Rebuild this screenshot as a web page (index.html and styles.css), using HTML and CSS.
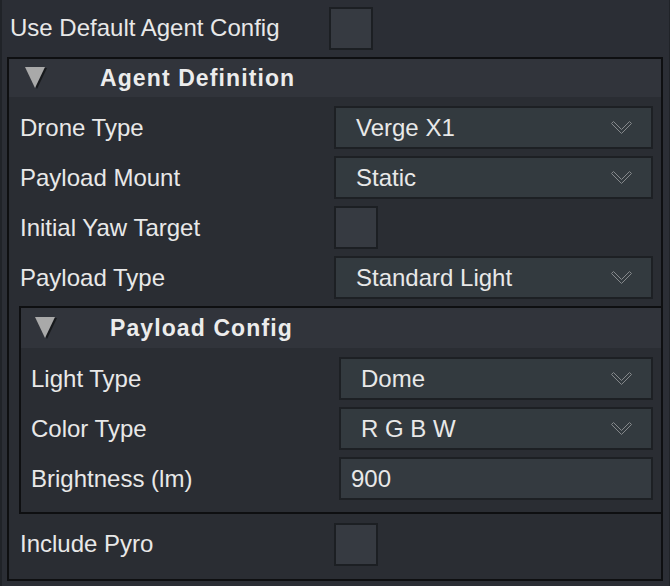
FILE: index.html
```html
<!DOCTYPE html>
<html>
<head>
<meta charset="utf-8">
<link rel="stylesheet" href="styles.css">
</head>
<body>
<div class="page">
  <div class="top-row">
    <span class="label top-label">Use Default Agent Config</span>
    <span class="checkbox"></span>
  </div>
  <section class="foldout agent">
    <div class="fold-header">
      <svg class="tri" width="22" height="22" viewBox="0 0 22 22"><polygon points="2,1 22,1 12,22" fill="#17191c"/><polygon points="0,0 20,0 10,21" fill="#a9a9a9"/></svg>
      <span class="fold-title">Agent Definition</span>
    </div>
    <div class="fold-body">
      <div class="row">
        <span class="label">Drone Type</span>
        <div class="dropdown"><span>Verge X1</span><svg class="chev" width="21" height="13" viewBox="0 0 21 13"><polygon points="0.5,2.5 2.5,0.5 10.5,8.5 18.5,0.5 20.5,2.5 10.5,12.5" fill="none" stroke="#85888b" stroke-width="1"/></svg></div>
      </div>
      <div class="row">
        <span class="label">Payload Mount</span>
        <div class="dropdown"><span>Static</span><svg class="chev" width="21" height="13" viewBox="0 0 21 13"><polygon points="0.5,2.5 2.5,0.5 10.5,8.5 18.5,0.5 20.5,2.5 10.5,12.5" fill="none" stroke="#85888b" stroke-width="1"/></svg></div>
      </div>
      <div class="row">
        <span class="label">Initial Yaw Target</span>
        <span class="checkbox"></span>
      </div>
      <div class="row">
        <span class="label">Payload Type</span>
        <div class="dropdown"><span>Standard Light</span><svg class="chev" width="21" height="13" viewBox="0 0 21 13"><polygon points="0.5,2.5 2.5,0.5 10.5,8.5 18.5,0.5 20.5,2.5 10.5,12.5" fill="none" stroke="#85888b" stroke-width="1"/></svg></div>
      </div>
      <section class="foldout payload">
        <div class="fold-header">
          <svg class="tri" width="22" height="22" viewBox="0 0 22 22"><polygon points="2,1 22,1 12,22" fill="#17191c"/><polygon points="0,0 20,0 10,21" fill="#a9a9a9"/></svg>
          <span class="fold-title">Payload Config</span>
        </div>
        <div class="fold-body">
          <div class="row">
            <span class="label">Light Type</span>
            <div class="dropdown"><span>Dome</span><svg class="chev" width="21" height="13" viewBox="0 0 21 13"><polygon points="0.5,2.5 2.5,0.5 10.5,8.5 18.5,0.5 20.5,2.5 10.5,12.5" fill="none" stroke="#85888b" stroke-width="1"/></svg></div>
          </div>
          <div class="row">
            <span class="label">Color Type</span>
            <div class="dropdown"><span>R G B W</span><svg class="chev" width="21" height="13" viewBox="0 0 21 13"><polygon points="0.5,2.5 2.5,0.5 10.5,8.5 18.5,0.5 20.5,2.5 10.5,12.5" fill="none" stroke="#85888b" stroke-width="1"/></svg></div>
          </div>
          <div class="row">
            <span class="label">Brightness (lm)</span>
            <div class="textfield">900</div>
          </div>
        </div>
      </section>
      <div class="row row-last">
        <span class="label">Include Pyro</span>
        <span class="checkbox"></span>
      </div>
    </div>
  </section>
</div>
</body>
</html>
```
FILE: styles.css
```css
html, body {
  margin: 0;
  padding: 0;
  background: #2b2f36;
}

.page {
  box-sizing: border-box;
  width: 670px;
  height: 586px;
  overflow: hidden;
  background: #2b2e35;
  border-left: 2px solid #202328;
  border-right: 1px solid #202328;
  font-family: "Liberation Sans", Arial, sans-serif;
  font-size: 24px;
  color: #e8e8e8;
}

.label {
  flex: none;
  white-space: nowrap;
}

.top-row {
  display: flex;
  align-items: center;
  height: 44px;
  margin: 6px 0 7px;
  padding-left: 8px;
}

.top-label {
  width: 319px;
}

.checkbox {
  box-sizing: border-box;
  display: block;
  width: 44px;
  height: 43px;
  background: #363a41;
  border: 2px solid #1c1f23;
}

.foldout {
  box-sizing: border-box;
  border: 2px solid #0e0f11;
}

.agent {
  width: 656px;
  margin-left: 5px;
  background: #2a2d33;
}

.fold-header {
  display: flex;
  align-items: center;
  height: 38px;
  padding-left: 16px;
  background: #31343b;
}

.tri {
  display: block;
  flex: none;
  margin-right: 53px;
}

.fold-title {
  font-weight: bold;
  font-size: 23px;
  letter-spacing: 1.1px;
  color: #ececec;
  white-space: nowrap;
}

.fold-body {
  display: flex;
  flex-direction: column;
  gap: 7px;
  padding: 9px 0 13px;
}

.row {
  display: flex;
  align-items: center;
  height: 43px;
  padding-left: 11px;
  padding-right: 8px;
}

.row .label {
  width: 314px;
}

.row-last {
  height: 44px;
  margin-top: 1px;
}

.dropdown {
  box-sizing: border-box;
  flex: 1;
  height: 43px;
  display: flex;
  align-items: center;
  justify-content: space-between;
  padding: 0 19px 0 20px;
  background: #333a3f;
  border: 2px solid #1d2024;
}

.chev {
  display: block;
  flex: none;
}

.textfield {
  box-sizing: border-box;
  flex: 1;
  height: 43px;
  display: flex;
  align-items: center;
  padding-left: 10px;
  background: #343a40;
  border: 2px solid #1d2024;
}

.payload {
  margin-left: 10px;
  border-right: none;
  background: #2a2d33;
}

.payload .fold-header {
  height: 40px;
  padding-left: 14px;
}

.payload .fold-body {
  padding: 9px 0 12px;
}

.payload .row {
  padding-left: 10px;
}

.payload .row .label {
  width: 308px;
}
```
